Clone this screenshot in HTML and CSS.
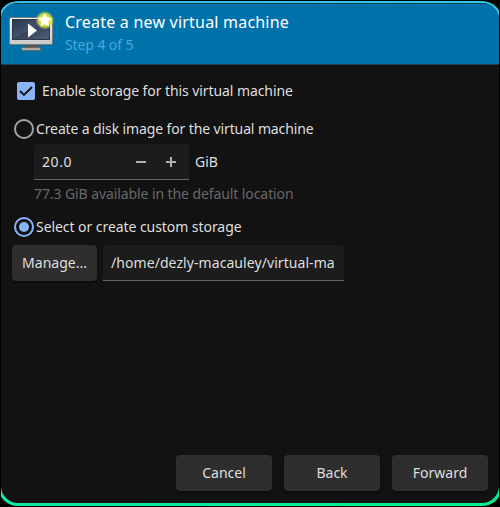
FILE: index.html
```html
<!DOCTYPE html>
<html lang="en">
<head>
<meta charset="utf-8">
<title>Create a new virtual machine</title>
<link rel="stylesheet" href="styles.css">
</head>
<body>
<div class="viewport">
<div class="frame">
<main class="window">
  <header class="header">
    <svg class="vm-icon" width="52" height="50" viewBox="0 0 52 50">
      <defs>
        <linearGradient id="bezel" x1="0" y1="0" x2="0" y2="1"><stop offset="0" stop-color="#f4f4f2"/><stop offset="1" stop-color="#c9c9c7"/></linearGradient>
        <linearGradient id="screen" x1="0" y1="0" x2="1" y2="1"><stop offset="0" stop-color="#28364d"/><stop offset=".48" stop-color="#43516a"/><stop offset=".5" stop-color="#34425a"/><stop offset="1" stop-color="#526078"/></linearGradient>
        <radialGradient id="glow"><stop offset=".4" stop-color="#f4ee48"/><stop offset=".7" stop-color="#d9e338" stop-opacity=".85"/><stop offset="1" stop-color="#a8d040" stop-opacity="0"/></radialGradient>
      </defs>
      <path d="M21 38h14v6H21z" fill="#55585a"/>
      <rect x="16.500" y="43.500" width="19" height="3" rx="1" fill="#a9aaa9" stroke="#656869"/>
      <rect x="4.500" y="13.500" width="43" height="27" rx="1.500" fill="url(#bezel)" stroke="#777c80"/>
      <rect x="7.500" y="15.500" width="37" height="20" fill="url(#screen)" stroke="#2b374b"/>
      <path d="M23 19.500v14l9-7z" fill="#fff"/>
      <circle cx="39.800" cy="16.200" r="9.500" fill="url(#glow)"/>
      <path d="M39.800 9l2.100 4.500 5 .6-3.700 3.400 1 5-4.400-2.500-4.400 2.500 1-5-3.700-3.400 5-.6z" fill="#fff"/>
    </svg>
    <div class="heading">
      <h1>Create a new virtual machine</h1>
      <p>Step 4 of 5</p>
    </div>
  </header>
  <section class="content">
    <div class="row enable">
      <svg width="18" height="18" viewBox="0 0 18 18"><rect width="18" height="18" rx="2" fill="#8ab4f8"/><path d="M3 9l4 4 8-8" fill="none" stroke="#121212" stroke-width="1.800"/></svg>
      <span>Enable storage for this virtual machine</span>
    </div>
    <div class="row disk">
      <svg width="20" height="20" viewBox="0 0 20 20"><circle cx="10" cy="10" r="9" fill="none" stroke="#a3a3a3" stroke-width="2"/></svg>
      <span>Create a disk image for the virtual machine</span>
    </div>
    <div class="row size">
      <div class="spin">
        <span>20.0</span>
        <svg class="minus" width="10" height="10" viewBox="0 0 10 10"><path d="M0 5h10" stroke="#b0b0b0" stroke-width="2"/></svg>
        <svg class="plus" width="10" height="10" viewBox="0 0 10 10"><path d="M0 5h10M5 0v10" stroke="#b0b0b0" stroke-width="2"/></svg>
      </div>
      <span class="unit">GiB</span>
    </div>
    <p class="hint">77.3 GiB available in the default location</p>
    <div class="row custom">
      <svg width="20" height="20" viewBox="0 0 20 20"><circle cx="10" cy="10" r="9" fill="none" stroke="#8ab4f8" stroke-width="2"/><circle cx="10" cy="10" r="5" fill="#8ab4f8"/></svg>
      <span>Select or create custom storage</span>
    </div>
    <div class="row storage">
      <button class="manage">Manage...</button>
      <div class="path">/home/dezly-macauley/virtual-ma</div>
    </div>
  </section>
  <footer class="actions">
    <button>Cancel</button>
    <button>Back</button>
    <button>Forward</button>
  </footer>
</main>
</div>
</div>
</body>
</html>
```
FILE: styles.css
```css
* { box-sizing: border-box; }
body {
  margin: 0;
  background: #000;
  color: #dfdfdf;
  font: 14px/20px "Noto Sans", sans-serif;
}
h1, p { margin: 0; font-weight: 400; }
svg { display: block; flex: none; }
.viewport {
  width: 500px;
  height: 507px;
  padding: 1px 0;
  border: solid #000;
  border-width: 0 1px;
  display: flex;
  overflow: clip;
}
.frame {
  flex: none;
  width: 504px;
  height: 505px;
  margin-left: -3px;
  padding: 2px 3px 3px;
  border-radius: 20px;
  background: linear-gradient(170deg, #33bfe8, #22cddc 20%, #14e6a8 85%, #00f090 95%);
}
.window {
  height: 500px;
  border-radius: 17px;
  overflow: hidden;
  background: #121212;
  display: flex;
  flex-direction: column;
}
.header {
  height: 62px;
  background: #0072aa;
  border-top: 1px solid #203f50;
  border-bottom: 1px solid #203d4c;
  display: flex;
}
.vm-icon { margin: 0 0 0 4px; }
.heading { padding: 7px 0 0 8px; white-space: nowrap; }
.heading h1 { font-size: 16px; line-height: 23px; color: #fff; letter-spacing: .21px; }
.heading p { color: #48a8dc; line-height: 22px; letter-spacing: -.1px; }
.content { flex: 1; padding-left: 11px; white-space: nowrap; }
.row { display: flex; align-items: center; }
.enable { margin: 16px 0 0 5px; gap: 7px; height: 20px; letter-spacing: -.08px; }
.disk { margin: 18px 0 0 2px; gap: 2px; height: 20px; letter-spacing: -.12px; }
.size { margin: 5px 0 0 22px; gap: 6px; height: 36px; }
.spin {
  width: 155px;
  height: 36px;
  padding: 0 13px 0 8px;
  display: flex;
  align-items: center;
  background: #1c1c1c;
  border-bottom: 1px solid #656565;
  border-radius: 4px 4px 0 0;
}
.spin span { padding-top: 1px; letter-spacing: .6px; }
.minus { margin-left: auto; }
.plus { margin-left: 20px; }
.hint { margin: 4px 0 0 22px; color: #686868; letter-spacing: -.09px; }
.custom { margin: 13px 0 0 2px; gap: 2px; height: 20px; letter-spacing: -.06px; }
.storage { margin-top: 8px; gap: 6px; height: 36px; }
button {
  font: inherit;
  color: #dfdfdf;
  width: 96px;
  height: 36px;
  padding: 0;
  border: 0;
  border-radius: 4px;
  background: #2e2e2e;
  box-shadow: 0 1px 2px #080808;
}
.manage { width: 85px; }
.path {
  width: 241px;
  height: 36px;
  padding: 8px 8px 7px;
  background: #1c1c1c;
  border-bottom: 1px solid #656565;
  border-radius: 4px 4px 0 0;
  letter-spacing: .07px;
}
.actions { display: flex; justify-content: flex-end; gap: 12px; padding: 0 11px 12px 0; }
```
